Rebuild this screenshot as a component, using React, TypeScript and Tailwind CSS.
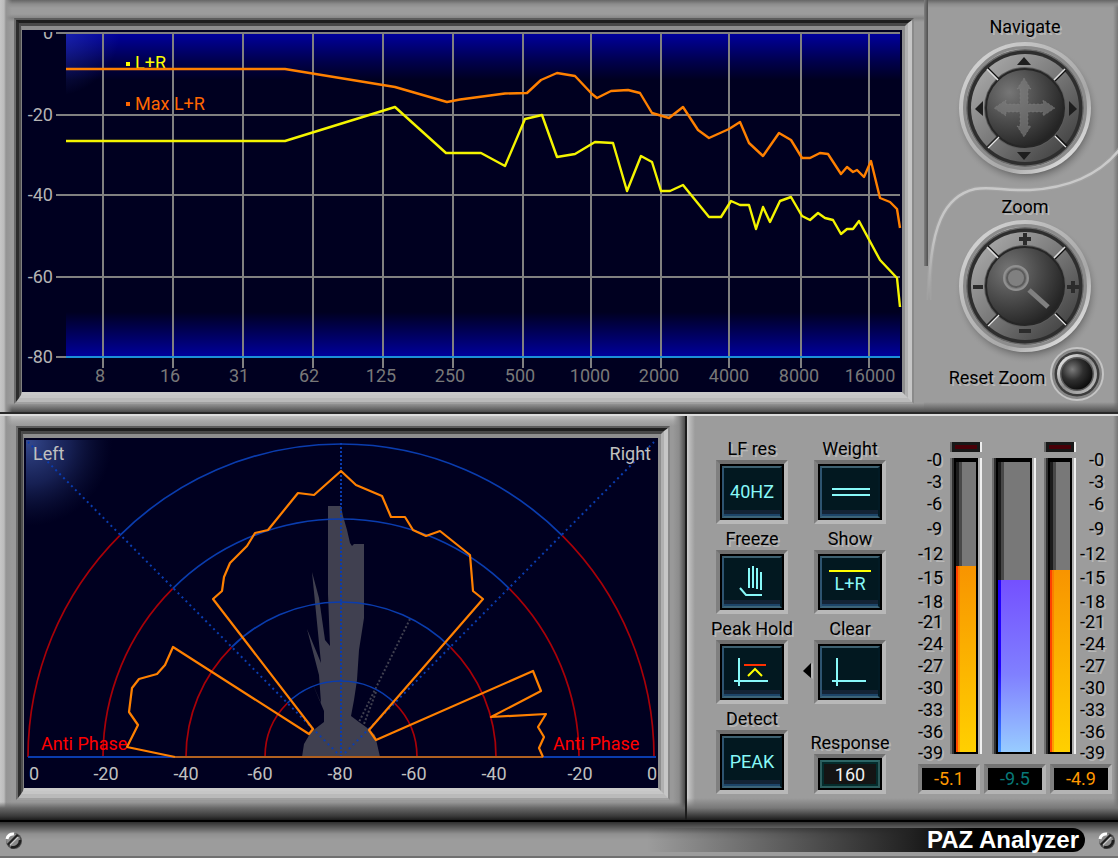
import type { ReactNode } from "react";

const ORANGE = "#ff8000";
const CYAN = "#88f8f8";

/* ---------- shared pieces ---------- */

function Bezel({ children }: { children: ReactNode }) {
  return (
    <div className="border-x-2 border-y-2 border-t-[#5c5c5c] border-l-[#6c6c6c] border-r-[#8a8a8a] border-b-[#a0a0a0]">
      <div className="border-t-3 border-l-3 border-r-4 border-b-4 border-t-[#1e1e1e] border-l-[#2c2c2c] border-r-[#c6c6c6] border-b-[#bababa]">
        <div className="border-t-3 border-l-2 border-r-3 border-b-3 border-t-[#484848] border-l-[#4e4e4e] border-r-[#b0b0b0] border-b-[#c6c6c6]">
          <div className="border-t-4 border-l border-r-3 border-b-3 border-t-[#8e8e8e] border-l-[#808080] border-r-[#8e8e8e] border-b-[#cacaca]">
            {children}
          </div>
        </div>
      </div>
    </div>
  );
}

function Label({ children, htmlFor }: { children: ReactNode; htmlFor?: string }) {
  const cls =
    "block whitespace-nowrap text-[18px] leading-[22px] text-black [text-shadow:2px_2px_0_#b8b8b8]";
  return htmlFor ? (
    <label htmlFor={htmlFor} className={cls}>
      {children}
    </label>
  ) : (
    <span className={cls}>{children}</span>
  );
}

/* ---------- spectrum ---------- */

const FREQS: [string, number, number][] = [
  ["8", 103, 100], ["16", 173, 170], ["31", 243, 239], ["62", 313, 309],
  ["125", 383, 381], ["250", 453, 450], ["500", 523, 520], ["1000", 591, 590],
  ["2000", 661, 659], ["4000", 729, 729], ["8000", 801, 799], ["16000", 869, 870],
];
const LEVELS: [string, number][] = [["0", 33], ["-20", 115], ["-40", 195], ["-60", 277], ["-80", 357]];

const MAX_TRACE =
  "66,69 285,69 395,87 447,102 460,99.5 505,93.5 527,93 541,80 557,73 575,76 592,94 597,98 611,91 628,90 640,93 652,113 669,118 683,107 698,130 709,138 729,129 740,122 749,143 763,156 779,133 791,140 802,158 810,158 820,153 828,154 841,174 847,167 853,172 857,170 864,177 871,161 880,198 890,202 897,209 900,228";
const LIVE_TRACE =
  "66,141 285,141 395,107 446,153 481,153 505,166 525,119 542,115 557,157 575,154 595,142 613,143 627,191 641,156 652,162 661,191 670,191 683,185 709,217 721,217 731,201 740,205 749,205 756,229 763,207 770,222 780,201 791,197 802,216 810,220 818,213 825,218 833,220 841,234 847,229 853,229 859,221 880,260 897,278 900,307";

function Spectrum() {
  return (
    <svg viewBox="22 30 880 362" className="block h-auto w-full bg-[#000020]" role="img" aria-label="Frequency spectrum" fontSize="18">
      <defs>
        <linearGradient id="specTop" x1="0" y1="0" x2="0" y2="1">
          <stop offset="0" stopColor="#00009c" />
          <stop offset="0.6" stopColor="#00004c" />
          <stop offset="1" stopColor="#000020" />
        </linearGradient>
        <linearGradient id="specBottom" x1="0" y1="0" x2="0" y2="1">
          <stop offset="0" stopColor="#000020" />
          <stop offset="1" stopColor="#0000a0" />
        </linearGradient>
        <radialGradient id="specGlow" gradientUnits="userSpaceOnUse" cx="54" cy="30" r="66">
          <stop offset="0" stopColor="#3040c0" stopOpacity="0.6" />
          <stop offset="1" stopColor="#3040c0" stopOpacity="0" />
        </radialGradient>
      </defs>
      <rect x="66" y="34" width="834" height="46" fill="url(#specTop)" />
      <rect x="66" y="312" width="834" height="46" fill="url(#specBottom)" />
      <rect x="66" y="34" width="70" height="70" fill="url(#specGlow)" />
      <g fill="#b4b4b4" textAnchor="end">
        {LEVELS.map(([t, y]) => (
          <text key={t} x="53" y={y + 6}>{t}</text>
        ))}
      </g>
      <rect x="22" y="30" width="44" height="2" fill="#000020" />
      <g fill="#787878" textAnchor="middle">
        {FREQS.map(([t, , x]) => (
          <text key={t} x={x} y="382">{t}</text>
        ))}
      </g>
      <text x="135" y="69" fill="#ffff00">L+R</text>
      <rect x="126" y="62" width="4" height="4" fill="#ffff00" />
      <g stroke="#808080" strokeWidth="2">
        {FREQS.map(([t, x]) => (
          <line key={t} x1={x} x2={x} y1="33" y2="368" />
        ))}
        {LEVELS.map(([t, y]) => (
          <line key={t} x1="56" x2="900" y1={y} y2={y} />
        ))}
      </g>
      <line x1="66" x2="900" y1="357" y2="357" stroke="#1c90d8" strokeWidth="2" />
      <text x="135" y="110" fill="#ff6600">Max L+R</text>
      <rect x="126" y="102" width="4" height="4" fill="#ff6600" />
      <g fill="none" strokeWidth="2.4" strokeLinejoin="round">
        <polyline points={MAX_TRACE} stroke={ORANGE} />
        <polyline points={LIVE_TRACE} stroke="#f4f400" />
      </g>
    </svg>
  );
}

/* ---------- stereo position ---------- */

const CX = 341;
const CY = 757;
const RINGS = [313, 238, 155, 76];
const POLAR_TICKS: [string, number][] = [
  ["0", 34], ["-20", 106], ["-40", 186], ["-60", 260], ["-80", 340],
  ["-60", 414], ["-40", 494], ["-20", 580], ["0", 652],
];
const PEAK_SHAPE =
  "175,757 127,747 138,725 129,712 132,688 139,679 157,674 165,665 173,647 309,734 313,729 213,599 222,591 224,577 230,563 247,546 255,533 268,530 298,493 314,495 341,471 356,485 382,496 391,517 405,517 413,530 426,536 440,531 470,555 473,591 483,599 369,730 376,740 533,671 541,691 491,717 546,714 538,727 544,737 539,748 543,757";
const LIVE_SHAPE =
  "302,757 304,744 311,732 324,722 324,711 311,680 321,703 319,675 307,629 321,663 312,572 319,598 325,640 330,646 328,594 328,506 341,506 343,516 347,530 350,543 352,546 354,544 364,544 364,618 359,650 357,680 354,700 351,716 359,722 366,727 375,735 380,757";

function ring(r: number) {
  const d = r * Math.SQRT1_2;
  return {
    blue: `M${CX - d} ${CY - d}A${r} ${r} 0 0 1 ${CX + d} ${CY - d}`,
    left: `M${CX - r} ${CY}A${r} ${r} 0 0 1 ${CX - d} ${CY - d}`,
    right: `M${CX + d} ${CY - d}A${r} ${r} 0 0 1 ${CX + r} ${CY}`,
  };
}

function Polar() {
  return (
    <svg viewBox="24 438 634 350" className="block h-auto w-full bg-[#000020]" role="img" aria-label="Stereo position" fontSize="18">
      <defs>
        <radialGradient id="polarGlow" gradientUnits="userSpaceOnUse" cx="28" cy="442" r="84">
          <stop offset="0" stopColor="#34488c" />
          <stop offset="0.5" stopColor="#1c2860" stopOpacity="0.8" />
          <stop offset="1" stopColor="#101840" stopOpacity="0" />
        </radialGradient>
      </defs>
      <rect x="26" y="440" width="90" height="90" fill="url(#polarGlow)" />
      <polygon points={LIVE_SHAPE} fill="#404050" />
      <g stroke="#404050" strokeWidth="2" strokeDasharray="2 2">
        <line x1="410" y1="619" x2="359" y2="722" />
        <line x1="376" y1="692" x2="364" y2="724" />
      </g>
      {RINGS.map((r) => {
        const p = ring(r);
        return (
          <g key={r} fill="none" strokeWidth="1.7">
            <path d={p.blue} stroke="#0a3cae" />
            <path d={p.left} stroke="#a80008" />
            <path d={p.right} stroke="#a80008" />
          </g>
        );
      })}
      <g stroke="#0a3cb0" strokeWidth="2">
        <line x1="341" y1="757" x2="28" y2="442" strokeDasharray="2 3.6" />
        <line x1="341" y1="757" x2="654" y2="442" strokeDasharray="2 3.6" />
        <line x1="341" y1="757" x2="341" y2="443" strokeDasharray="2 2" />
      </g>
      <line x1="28" x2="656" y1="757" y2="757" stroke="#0a3cae" strokeWidth="2" />
      <g fill="#ff0000">
        <text x="41" y="750">Anti Phase</text>
        <text x="553" y="750">Anti Phase</text>
      </g>
      <line x1="175" x2="543" y1="757" y2="757" stroke="#b06020" strokeWidth="2" />
      <polyline points={PEAK_SHAPE} fill="none" stroke={ORANGE} strokeWidth="2.2" strokeLinejoin="round" />
      <g fill="#c0c0c0">
        <text x="33" y="460">Left</text>
        <text x="651" y="460" textAnchor="end">Right</text>
        <g textAnchor="middle">
          {POLAR_TICKS.map(([t, x]) => (
            <text key={x} x={x} y="780">{t}</text>
          ))}
        </g>
      </g>
    </svg>
  );
}

/* ---------- navigation ---------- */

function Knob({ kind }: { kind: "navigate" | "zoom" }) {
  const nav = kind === "navigate";
  const names = nav
    ? ["Move up", "Move left", "Move right", "Move down"]
    : ["Zoom in vertically", "Zoom out horizontally", "Zoom in horizontally", "Zoom out vertically"];
  const btn = "cursor-pointer rounded-full";
  return (
    <div className="relative size-[136px]">
      <svg viewBox="-68 -68 136 136" className="block size-full overflow-visible" aria-hidden="true">
        <defs>
          <linearGradient id={`${kind}Rim`} x1="0.1" y1="0.1" x2="0.9" y2="0.9">
            <stop offset="0" stopColor="#d4d4d4" />
            <stop offset="0.3" stopColor="#bcbcbc" />
            <stop offset="0.7" stopColor="#a8a8a8" />
            <stop offset="1" stopColor="#e4e4e4" />
          </linearGradient>
          <linearGradient id={`${kind}Track`} x1="0.1" y1="0.1" x2="0.9" y2="0.9">
            <stop offset="0" stopColor="#a8a8a8" />
            <stop offset="0.5" stopColor="#787878" />
            <stop offset="1" stopColor="#424242" />
          </linearGradient>
          <radialGradient id={`${kind}Ball`} cx="0.3" cy="0.3" r="0.75">
            <stop offset="0" stopColor="#767676" />
            <stop offset="0.5" stopColor="#4c4c4c" />
            <stop offset="1" stopColor="#242424" />
          </radialGradient>
          <radialGradient id={`${kind}Shade`}>
            <stop offset="0.82" stopColor="#585858" stopOpacity="0.8" />
            <stop offset="1" stopColor="#9c9c9c" stopOpacity="0" />
          </radialGradient>
        </defs>
        <circle cx="2" cy="5" r="73" fill={`url(#${kind}Shade)`} />
        <circle r="66" fill={`url(#${kind}Rim)`} />
        <circle r="60.5" fill="none" stroke="#8c8c8c" strokeWidth="3" />
        <circle r="59" fill="#6a6a6a" />
        <circle r="57.5" fill="#2e2e2e" />
        <circle r="54" fill={`url(#${kind}Track)`} />
        <circle r="41" fill="#5c5c5c" />
        <circle r="39" fill={`url(#${kind}Ball)`} stroke="#262626" strokeWidth="2" />
        <g strokeWidth="1.5">
          <path d="M-37 -40L-26 -29" stroke="#101010" />
          <path d="M-38 -39L-27 -28" stroke="#dddddd" />
          <path d="M41 -38L30 -27" stroke="#101010" />
          <path d="M40 -39L29 -28" stroke="#dddddd" />
          <path d="M-37 40L-26 29" stroke="#e4e4e4" />
          <path d="M-38 39L-27 28" stroke="#222222" />
          <path d="M41 39L30 28" stroke="#e4e4e4" />
          <path d="M42 38L31 27" stroke="#101010" />
        </g>
        {nav ? (
          <>
            <g fill="#1e1e1e">
              <path d="M-8 -43L-1 -51L6 -43Z" />
              <path d="M-8 44L-1 52L6 44Z" />
              <path d="M-42 -7L-50 1L-42 8Z" />
              <path d="M44 -7L52 1L44 8Z" />
            </g>
            <path
              d="M-1 -30L6 -19H3V-4H18V-8L30 0L18 8V4H3V18H6L-1 29L-8 18H-5V4H-19V8L-31 0L-19 -8V-4H-5V-19H-8Z"
              fill="#808080"
              fillOpacity="0.6"
              stroke="#8a8a8a"
              strokeOpacity="0.4"
              strokeDasharray="2 2"
            />
          </>
        ) : (
          <>
            <g stroke="#2c2c2c" strokeWidth="4">
              <path d="M-6 -47H6M0 -53V-41" />
              <path d="M-6 45H6" />
              <path d="M-52 1H-42" />
              <path d="M42 1H54M48 -5V7" />
            </g>
            <circle cx="-9" cy="-8" r="12" fill="#7c7c7c" stroke="#909090" strokeWidth="2" />
            <circle cx="-9" cy="-8" r="9" fill="#808080" stroke="#5c5c5c" strokeWidth="2" />
            <path d="M4 4L23 21" stroke="#808080" strokeWidth="5" />
          </>
        )}
      </svg>
      <div className="absolute inset-0 grid grid-cols-3 grid-rows-3">
        <span />
        <button type="button" aria-label={names[0]} className={btn} />
        <span />
        <button type="button" aria-label={names[1]} className={btn} />
        <span />
        <button type="button" aria-label={names[2]} className={btn} />
        <span />
        <button type="button" aria-label={names[3]} className={btn} />
        <span />
      </div>
    </div>
  );
}

function NavigationPanel() {
  return (
    <aside className="relative w-[194px] shrink-0 bg-[linear-gradient(to_bottom,#666_0,#8c8c8c_4px,transparent_8px,transparent_calc(100%-10px),#666_calc(100%-3px),#4c4c4c_100%),linear-gradient(to_left,#777_0,#9c9c9c_5px)]">
      <svg viewBox="924 0 194 412" preserveAspectRatio="none" className="absolute inset-0 size-full" aria-hidden="true">
        <defs>
          <linearGradient id="curveFade" gradientUnits="userSpaceOnUse" x1="0" y1="150" x2="0" y2="300">
            <stop offset="0" stopColor="#cccccc" />
            <stop offset="0.6" stopColor="#c4c4c4" />
            <stop offset="1" stopColor="#9c9c9c" />
          </linearGradient>
          <linearGradient id="groove" x1="0" x2="1">
            <stop offset="0" stopColor="#8c8c8c" />
            <stop offset="1" stopColor="#505050" />
          </linearGradient>
        </defs>
        <rect x="923" y="0" width="5" height="266" fill="url(#groove)" />
        <path d="M1120 149C1100 174 1070 188 1030 190C1005 191 990 186 975 189C945 196 929 225 929 300" fill="none" stroke="#a8a8a8" strokeWidth="5" strokeOpacity="0.5" />
        <path d="M1120 149C1100 174 1070 188 1030 190C1005 191 990 186 975 189C945 196 929 225 929 300" fill="none" stroke="url(#curveFade)" strokeWidth="2.5" />
      </svg>
      <div className="relative flex flex-col items-center pt-4 pl-2">
        <Label>Navigate</Label>
        <div className="mt-0.5">
          <Knob kind="navigate" />
        </div>
        <div className="mt-5">
          <Label>Zoom</Label>
        </div>
        <Knob kind="zoom" />
        <button type="button" className="-mt-2 flex cursor-pointer items-center gap-1 whitespace-nowrap pl-1">
          <span className="pt-2">
            <Label>Reset Zoom</Label>
          </span>
          <svg viewBox="-28 -28 56 56" className="block size-14" aria-hidden="true">
            <defs>
              <radialGradient id="resetBall" cx="0.35" cy="0.35" r="0.7">
                <stop offset="0" stopColor="#7c7c7c" />
                <stop offset="0.5" stopColor="#303030" />
                <stop offset="1" stopColor="#0c0c0c" />
              </radialGradient>
              <linearGradient id="resetRim" x1="0" y1="0" x2="1" y2="1">
                <stop offset="0" stopColor="#ffffff" />
                <stop offset="0.5" stopColor="#8c8c8c" />
                <stop offset="1" stopColor="#c8c8c8" />
              </linearGradient>
            </defs>
            <circle r="26" fill="#868686" stroke="#c4c4c4" strokeWidth="2" />
            <circle r="22.5" fill="#3c3c3c" />
            <circle r="20" fill="url(#resetRim)" />
            <circle r="17" fill="#5a5a5a" />
            <circle r="15.5" fill="url(#resetBall)" />
          </svg>
        </button>
      </div>
    </aside>
  );
}

/* ---------- option buttons ---------- */

function OptionButton({ id, label, children }: { id: string; label: string; children: ReactNode }) {
  return (
    <div className="flex flex-col items-center">
      <Label htmlFor={id}>{label}</Label>
      <button
        id={id}
        type="button"
        className="h-16 w-[72px] cursor-pointer border-4 border-t-[#707070] border-r-[#b8b8b8] border-b-[#b8b8b8] border-l-[#808080]"
      >
        <span className="block size-full border-2 border-black">
          <span className="flex size-full items-center justify-center border-2 border-t-[#3c6070] border-r-[#021a24] border-b-[#3c6478] border-l-[#2e5470] bg-[linear-gradient(to_top,#1c4468_0,#1c4468_2px,#142436_2px,#142436_6px,#021820_6px)] text-[18px] leading-[22px] text-[#88f8f8]">
            {children}
          </span>
        </span>
      </button>
    </div>
  );
}

function Icon({ children }: { children: ReactNode }) {
  return (
    <svg viewBox="-28 -24 56 48" className="block h-12 w-14 shrink-0" fill="none" stroke={CYAN} strokeWidth="2" aria-hidden="true">
      {children}
    </svg>
  );
}

function Options() {
  return (
    <div className="grid grid-cols-[72px_72px] content-start gap-x-[26px] gap-y-1">
      <OptionButton id="lfres" label="LF res">40HZ</OptionButton>
      <OptionButton id="weight" label="Weight">
        <Icon><path d="M-18 -3H20M-18 3H20" /></Icon>
      </OptionButton>
      <OptionButton id="freeze" label="Freeze">
        <Icon><path d="M-3 -14V6M1 -16V6M5 -14V7M9 -10V8M-12 6L-6 13H10" /></Icon>
      </OptionButton>
      <OptionButton id="show" label="Show">
        <span className="flex w-[42px] flex-col items-center border-t-2 border-[#ffff00] pt-px">L+R</span>
      </OptionButton>
      <OptionButton id="hold" label="Peak Hold">
        <Icon>
          <path d="M-13 -14V14M-18 9H16" />
          <path d="M-8 -7H14" stroke="#ff3000" />
          <path d="M-4 4L3 -3L10 4" stroke="#ffff00" />
        </Icon>
      </OptionButton>
      <div className="relative">
        <OptionButton id="clear" label="Clear">
          <Icon><path d="M-13 -14V14M-18 9H16" /></Icon>
        </OptionButton>
        <svg viewBox="0 0 10 16" className="absolute top-[45px] -left-[11px] h-4 w-[10px]" aria-hidden="true">
          <path d="M10 0V16L1 8Z" fill="#b8b8b8" />
          <path d="M8 0V15L0 8Z" fill="#000000" />
        </svg>
      </div>
      <OptionButton id="detect" label="Detect">PEAK</OptionButton>
      <div className="flex flex-col items-center justify-end">
        <Label htmlFor="response">Response</Label>
        <div className="h-10 w-[72px] border-4 border-t-[#707070] border-r-[#b8b8b8] border-b-[#b8b8b8] border-l-[#808080]">
          <div className="size-full border-2 border-black">
            <input
              id="response"
              type="text"
              inputMode="numeric"
              defaultValue="160"
              className="block size-full rounded-none border-2 border-t-[#2c6464] border-r-[#2c5858] border-b-[#2c5c5c] border-l-[#2c5c5c] bg-[#141414] p-0 text-center text-[18px] leading-6 text-[#f0f0f0] shadow-[inset_0_0_0_2px_#042c2c] outline-none"
            />
          </div>
        </div>
      </div>
    </div>
  );
}

/* ---------- level meters ---------- */

const SCALE: [string, string][] = [
  ["-0", "h-[22px]"], ["-3", "h-[22px]"], ["-6", "h-[25px]"], ["-9", "h-[25px]"],
  ["-12", "h-[24px]"], ["-15", "h-[24px]"], ["-18", "h-[20px]"], ["-21", "h-[22px]"],
  ["-24", "h-[22px]"], ["-27", "h-[22px]"], ["-30", "h-[22px]"], ["-33", "h-[22px]"],
  ["-36", "h-[21px]"], ["-39", "h-[22px]"],
];

function Scale() {
  return (
    <ul className="w-6 pt-[11px] text-right text-[18px] leading-[22px] text-black [text-shadow:2px_2px_0_#b8b8b8]">
      {SCALE.map(([t, h]) => (
        <li key={t} className={h}>{t}</li>
      ))}
    </ul>
  );
}

function Led() {
  return (
    <div className="flex h-[10px] items-center border-r-2 border-l-2 border-r-[#eeeeee] border-l-[#666666] bg-[#181818] px-[3px]">
      <span className="block h-1 w-full bg-[#480008]" />
    </div>
  );
}

function Channel({ name, level, fill, led, width }: { name: string; level: number; fill: string; led?: boolean; width: string }) {
  return (
    <div className={`flex flex-col gap-[6px] pt-1 ${width}`}>
      {led ? <Led /> : <div className="h-[10px]" />}
      <div
        role="meter"
        aria-label={name}
        aria-valuemin={0}
        aria-valuemax={100}
        aria-valuenow={level}
        className="h-[296px] border-r-2 border-l-2 border-r-[#f0f0f0] border-l-[#707070]"
      >
        <div className="size-full border-r-2 border-l-2 border-r-[#b0b0b0] border-l-[#303030]">
          <div className="flex size-full flex-col justify-end border-t-4 border-r-2 border-b-2 border-l-2 border-black bg-[linear-gradient(to_right,#1c1c1c_0,#1c1c1c_3px,#484848_3px,#484848_6px,#787878_6px)]">
            <div className={fill} style={{ height: `${level}%` }} />
          </div>
        </div>
      </div>
    </div>
  );
}

function Readout({ children, tone }: { children: ReactNode; tone: string }) {
  return (
    <output className="block h-[30px] w-[62px] border-4 border-t-[#747474] border-r-[#b4b4b4] border-b-[#b4b4b4] border-l-[#808080] bg-black">
      <span className={`block text-center text-[18px] leading-[22px] ${tone}`}>{children}</span>
    </output>
  );
}

function Meters() {
  const amber =
    "bg-[linear-gradient(to_right,rgb(255_48_0/.85)_0,rgb(255_48_0/.85)_2px,rgb(255_80_0/.4)_2px,rgb(255_80_0/.4)_4px,transparent_4px),linear-gradient(to_bottom,#f89400,#ffd000)]";
  const violet =
    "bg-[linear-gradient(to_bottom,#2000ff_50%,#3c90ff),linear-gradient(to_bottom,#7450ff,#8080ff_55%,#98ccff)] bg-[size:3px_100%,100%_100%] bg-no-repeat";
  return (
    <div className="w-[194px]">
      <div className="flex">
        <Scale />
        <div className="ml-2 flex">
          <Channel name="Left level" level={64.1} fill={amber} led width="w-8" />
          <div className="ml-[10px]">
            <Channel name="Sum level" level={59.3} fill={violet} width="w-11" />
          </div>
          <div className="ml-2">
            <Channel name="Right level" level={62.8} fill={amber} led width="w-8" />
          </div>
        </div>
        <div className="ml-1">
          <Scale />
        </div>
      </div>
      <div className="flex gap-1">
        <Readout tone="text-[#ff9800]">-5.1</Readout>
        <Readout tone="text-[#087878]">-9.5</Readout>
        <Readout tone="text-[#ff9800]">-4.9</Readout>
      </div>
    </div>
  );
}

/* ---------- footer ---------- */

function Screw() {
  return (
    <svg viewBox="-9 -9 18 18" className="block size-[18px] shrink-0" aria-hidden="true">
      <circle cx="1" cy="1" r="8" fill="#4c4c4c" />
      <circle r="7" fill="#8a8a8a" />
      <path d="M-6 -1A6 6 0 0 1 1 -6" stroke="#ffffff" strokeWidth="3" fill="none" />
      <path d="M-5 5L5 -5" stroke="#202020" strokeWidth="3" />
      <path d="M-3 5L5 -3" stroke="#c8c8c8" strokeWidth="1.2" />
      <path d="M-2 7A7 7 0 0 0 7 0" stroke="#1e1e1e" strokeWidth="2.5" fill="none" />
    </svg>
  );
}

export default function App() {
  return (
    <main className="w-full min-w-[900px] bg-[#9c9c9c] font-[Roboto,'Liberation_Sans',sans-serif]">
      <div className="flex border-b-2 border-[#282828]">
        <section className="min-w-0 flex-1 bg-[linear-gradient(to_right,#c6c6c6_0,#bcbcbc_4px,#949494_6px,transparent_12px),linear-gradient(to_bottom,#666_0,#8c8c8c_4px,#9c9c9c_8px,#9c9c9c_14px,#868686_18px,#9c9c9c_22px,#9c9c9c_calc(100%-9px),#707070_calc(100%-4px),#4c4c4c_100%)] pt-[18px] pr-[10px] pb-2 pl-[14px]">
          <Bezel>
            <Spectrum />
          </Bezel>
        </section>
        <NavigationPanel />
      </div>
      <div className="flex border-t-2 border-[#dcdcdc]">
        <section className="min-w-0 flex-1 border-r-2 border-[#1c1c1c] bg-[linear-gradient(to_bottom,transparent_calc(100%-18px),#686868_calc(100%-12px),#3a3a3a_calc(100%-4px),#1c1c1c_100%),linear-gradient(to_left,#4c4c4c_0,#8c8c8c_6px,transparent_12px),linear-gradient(to_right,#c6c6c6_0,#bcbcbc_4px,#949494_6px,transparent_12px),linear-gradient(to_bottom,#c0c0c0_0,#a8a8a8_5px,#999_10px)] pt-[10px] pr-[15px] pb-5 pl-4">
          <Bezel>
            <Polar />
          </Bezel>
        </section>
        <section className="flex shrink-0 gap-8 bg-[linear-gradient(to_bottom,transparent_calc(100%-22px),#787878_calc(100%-12px),#3a3a3a_calc(100%-4px),#1c1c1c_100%),linear-gradient(to_right,#d0d0d0_0,#b8b8b8_3px,#9c9c9c_8px,transparent_9px),linear-gradient(to_left,#777_0,#9c9c9c_5px)] pt-[22px] pr-[6px] pl-[29px]">
          <Options />
          <Meters />
        </section>
      </div>
      <footer className="flex h-[38px] items-center justify-between border-t-2 border-black bg-[linear-gradient(to_bottom,#303030_0,#606060_6px,#909090_12px,#9c9c9c_18px,#9c9c9c_calc(100%-2px),#707070_calc(100%-2px))] pr-[3px] pl-1">
        <Screw />
        <div className="flex items-center gap-3">
          <h1 className="rounded-r-full bg-[linear-gradient(to_right,transparent_0,#222_60%,#000_75%)] pr-1.5 pl-[280px] font-['Liberation_Sans',Arial,sans-serif] text-[24px] leading-[24px] font-bold text-white">
            PAZ Analyzer
          </h1>
          <Screw />
        </div>
      </footer>
    </main>
  );
}
